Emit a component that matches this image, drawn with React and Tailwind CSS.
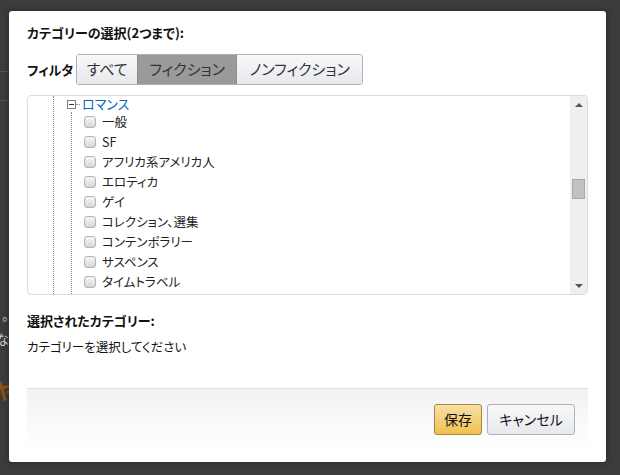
import React from 'react';

const jp = "font-['Meiryo','Noto_Sans_CJK_JP',sans-serif] [font-feature-settings:'palt']";

const items = [
    '一般',
    'SF',
    'アフリカ系アメリカ人',
    'エロティカ',
    'ゲイ',
    'コレクション、選集',
    'コンテンポラリー',
    'サスペンス',
    'タイムトラベル',
    'パラノーマル',
];

function Checkbox() {
    return (
        <span className="w-[12px] h-[12px] rounded-[3px] border border-[#b5b5b5] bg-gradient-to-b from-[#f6f6f6] to-[#d6d6d6] shrink-0" />
    );
}

function Expander() {
    return (
        <span className="w-[9px] h-[9px] border border-[#7f7f7f] bg-white flex items-center justify-center shrink-0">
            <span className="w-[5px] h-px bg-[#333]" />
        </span>
    );
}

function Tree() {
    return (
        <div className="flex-1 flex overflow-hidden pl-[25px]">
            <div className="border-l border-dotted border-[#8a8a8a] pl-[13px] flex flex-col flex-1">
                <div className="flex items-center h-[17px]">
                    <Expander />
                    <span className="w-[4px] border-t border-dotted border-[#8a8a8a]" />
                    <span className="ml-[2px] text-[13px] leading-[16px] text-[#0066c0]">ロマンス</span>
                </div>
                <div className="ml-[4px] border-l border-dotted border-[#8a8a8a] pl-[12px] flex flex-col flex-1">
                    {items.map((name) => (
                        <div key={name} className="flex items-center gap-[6px] h-[20px] shrink-0">
                            <Checkbox />
                            <span className="text-[12.5px] text-[#222] whitespace-nowrap">{name}</span>
                        </div>
                    ))}
                </div>
            </div>
        </div>
    );
}

function Scrollbar() {
    return (
        <div className="w-[17px] bg-[#efefef] flex flex-col items-center">
            <div className="h-[17px] flex items-center justify-center">
                <span className="w-0 h-0 border-l-[4px] border-r-[4px] border-b-[4px] border-l-transparent border-r-transparent border-b-[#555]" />
            </div>
            <div className="mt-[66px] w-[13px] h-[20px] bg-[#c1c1c1] border border-[#a9a9a9]" />
            <div className="flex-1" />
            <div className="h-[17px] flex items-center justify-center">
                <span className="w-0 h-0 border-l-[4px] border-r-[4px] border-t-[4px] border-l-transparent border-r-transparent border-t-[#555]" />
            </div>
        </div>
    );
}

export default function App() {
    return (
        <div className={`relative w-[620px] h-[475px] bg-[#3c3c3c] overflow-hidden ${jp}`}>
            {/* page behind the overlay */}
            <div className="flex flex-col">
                <div className="h-[71px]" />
                <div className="h-px w-[12px] bg-[#585858]" />
                <div className="h-[28px]" />
                <div className="h-px w-[12px] bg-[#585858]" />
                <div className="h-[204px]" />
                <span className="text-[13px] text-[#cfcfcf] leading-[20px] pl-[2px]">。</span>
                <span className="text-[13px] text-[#cfcfcf] leading-[20px] -ml-[4px] mt-[4px]">な。</span>
                <span className="text-[22px] font-bold text-[#8a5312] leading-[28px] -ml-[6px] mt-[26px]">ヤ</span>
            </div>

            {/* modal */}
            <div className="absolute left-[9px] top-[11px] w-[597px] h-[451px] bg-white rounded-[3px] shadow-[0_0_6px_rgba(0,0,0,0.4)] px-[18px] flex flex-col">
                <h2 className="mt-[12px] text-[13px] leading-[20px] font-bold text-[#111]">カテゴリーの選択(2つまで):</h2>

                <div className="mt-[11px] flex items-center gap-[3px]">
                    <span className="text-[13px] font-bold text-[#111]">フィルタ</span>
                    <div className="flex h-[31px] border border-[#adb1b8] rounded-[3px] overflow-hidden text-[15px] text-[#333]">
                        <button className="w-[60px] bg-gradient-to-b from-[#f7f8fa] to-[#e7e9ec]">すべて</button>
                        <button className="w-[100px] bg-[#9a9a9a] border-x border-[#8d8d8d]">フィクション</button>
                        <button className="w-[125px] bg-gradient-to-b from-[#f7f8fa] to-[#e7e9ec]">ノンフィクション</button>
                    </div>
                </div>

                <div className="mt-[10px] h-[200px] border border-[#dcdcdc] rounded-[4px] flex overflow-hidden">
                    <Tree />
                    <Scrollbar />
                </div>

                <h3 className="mt-[16px] text-[13px] leading-[20px] font-bold text-[#111]">選択されたカテゴリー:</h3>
                <p className="mt-[6px] text-[12.5px] leading-[20px] text-[#111]">カテゴリーを選択してください</p>

                <div className="mt-[31px] h-[62px] border-t border-[#dedede] bg-gradient-to-b from-[#f2f2f2] to-white flex justify-end items-start pt-[15px] pr-[13px] gap-[5px]">
                    <button className="w-[48px] h-[31px] rounded-[3px] border border-[#a88734] bg-gradient-to-b from-[#f7dfa5] to-[#f0c14b] text-[14px] text-[#111]">保存</button>
                    <button className="w-[88px] h-[31px] rounded-[3px] border border-[#adb1b8] bg-gradient-to-b from-[#f7f8fa] to-[#e7e9ec] text-[14px] text-[#111]">キャンセル</button>
                </div>
            </div>
        </div>
    );
}
